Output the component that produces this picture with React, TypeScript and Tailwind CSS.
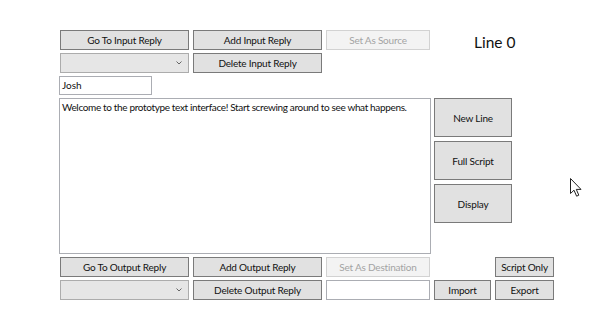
import React from "react";

const font = { fontFamily: 'Lato, "Noto Sans", sans-serif' };

const Btn = ({ label, w, h = "h-[20px]", disabled = false }: { label: string; w: string; h?: string; disabled?: boolean }) => (
	<button
		className={`${w} ${h} flex shrink-0 items-center justify-center border text-[10px] leading-none tracking-[-0.2px] ${
			disabled
				? "border-[#d2d2d2] bg-[#f3f3f3] text-[#a3a3a3]"
				: "border-[#7a7a7a] bg-[#e1e1e1] text-[#111]"
		}`}
	>
		{label}
	</button>
);

const Combo = () => (
	<div className="flex h-[20px] w-[129px] shrink-0 items-center justify-end border border-[#acacac] bg-[#e6e6e6] pr-[6px]">
		<svg width="6" height="4" viewBox="0 0 6 4">
			<path d="M0.5 0.5 L3 3 L5.5 0.5" fill="none" stroke="#666" strokeWidth="1" />
		</svg>
	</div>
);

export default function App() {
	return (
		<div className="relative h-[315px] w-[600px] bg-white" style={font}>
			<div className="flex flex-col gap-[3px] pl-[59px] pt-[30px]">
				<div className="flex h-[20px] items-start gap-[4px] pl-px">
					<Btn label="Go To Input Reply" w="w-[129px]" />
					<Btn label="Add Input Reply" w="w-[129px]" />
					<Btn label="Set As Source" w="w-[104px]" disabled />
					<div className="ml-[40px] mt-[5px] whitespace-nowrap text-[15.5px] leading-none text-[#111]">Line 0</div>
				</div>
				<div className="flex gap-[4px] pl-px">
					<Combo />
					<Btn label="Delete Input Reply" w="w-[129px]" />
				</div>
				<div className="flex h-[19px] w-[93px] items-center border border-[#abadb3] bg-white pl-[2px] text-[10px] text-[#111]">
					Josh
				</div>
				<div className="flex gap-[3px]">
					<div className="h-[156px] w-[372px] border border-[#abadb3] bg-white px-[2px] pt-[2px] text-[10px] leading-[13px] tracking-[-0.35px] text-[#111]">
						Welcome to the prototype text interface! Start screwing around to see what happens.
					</div>
					<div className="flex flex-col gap-[4px]">
						<Btn label="New Line" w="w-[78px]" h="h-[39px]" />
						<Btn label="Full Script" w="w-[78px]" h="h-[39px]" />
						<Btn label="Display" w="w-[78px]" h="h-[39px]" />
					</div>
				</div>
				<div className="flex gap-[4px] pl-px">
					<Btn label="Go To Output Reply" w="w-[129px]" />
					<Btn label="Add Output Reply" w="w-[129px]" />
					<Btn label="Set As Destination" w="w-[104px]" disabled />
					<div className="ml-[61px]">
						<Btn label="Script Only" w="w-[59px]" />
					</div>
				</div>
				<div className="flex gap-[4px] pl-px">
					<Combo />
					<Btn label="Delete Output Reply" w="w-[129px]" />
					<div className="h-[20px] w-[104px] shrink-0 border border-[#abadb3] bg-white" />
					<Btn label="Import" w="w-[57px]" />
					<Btn label="Export" w="w-[59px]" />
				</div>
			</div>
			<svg className="absolute left-[570px] top-[178px]" width="13" height="20" viewBox="0 0 13 20">
				<path
					d="M0.5 0.5 L0.5 15.5 L4 12.2 L6.6 18.2 L8.8 17.2 L6.3 11.4 L11 11.4 Z"
					fill="#fff"
					stroke="#222"
					strokeWidth="1"
					strokeLinejoin="round"
				/>
			</svg>
		</div>
	);
}
